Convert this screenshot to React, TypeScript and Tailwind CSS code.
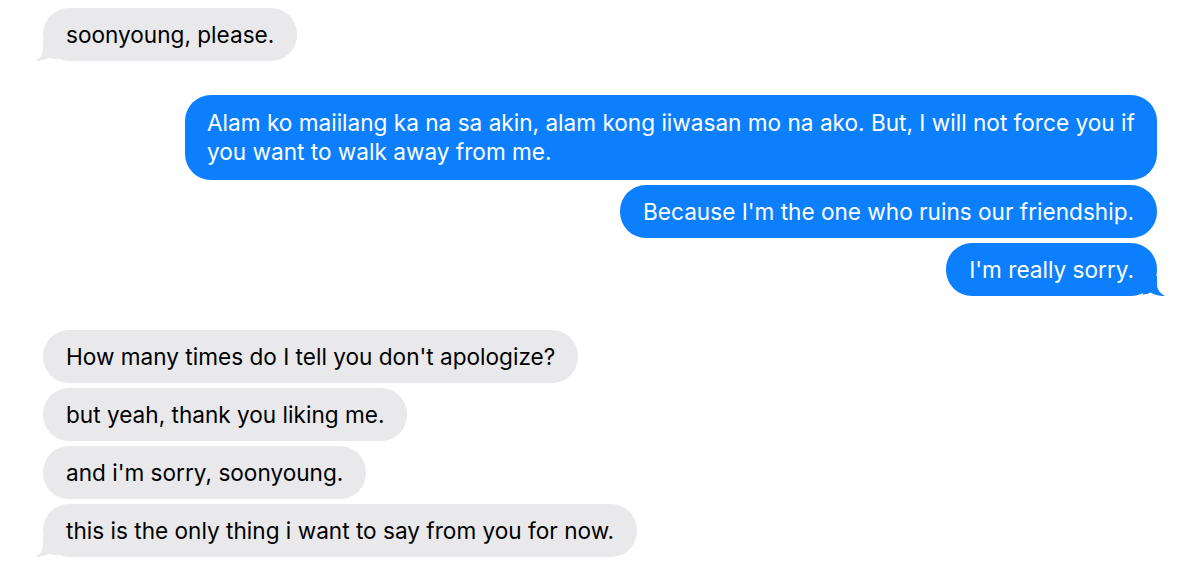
import React from 'react';

type Msg = { text: string; tail?: boolean };

const Tail = ({ side }: { side: 'left' | 'right' }) => (
  <svg
    width="22"
    height="20"
    viewBox="0 0 22 20"
    className={`absolute bottom-0 ${side === 'left' ? '-left-[8px] text-[#e9e9eb]' : '-right-[8px] -scale-x-100 text-[#0b7ffe]'}`}
  >
    <path
      d="M8 0 L8 8 C8 13 5.5 17 0 20 C6 20.3 11 18.8 14.5 16.5 C16.5 17.6 19 18.4 22 18.6 L22 0 Z"
      fill="currentColor"
    />
  </svg>
);

const Bubble = ({ msg, mine, wide }: { msg: Msg; mine?: boolean; wide?: boolean }) => (
  <div
    className={`relative rounded-[26px] py-[12px] text-[22.6px] leading-[29px] ${
      mine ? 'self-end bg-[#0b7ffe] text-white' : 'self-start bg-[#e9e9eb] text-black'
    } ${wide ? 'max-w-[972px] px-[22px] pt-[13px] pb-[14px] rounded-[24px]' : 'px-[23px]'}`}
  >
    {msg.tail && <Tail side={mine ? 'right' : 'left'} />}
    <span className="relative">{msg.text}</span>
  </div>
);

const App: React.FC = () => {
  return (
    <div
      className="w-[1200px] h-[570px] bg-white px-[43px] pt-[8px] flex flex-col overflow-hidden"
      style={{ fontFamily: 'Inter, "Noto Sans", sans-serif' }}
    >
      {/* first incoming */}
      <div className="flex flex-col gap-[5px]">
        <Bubble msg={{ text: 'soonyoung, please.', tail: true }} />
      </div>

      {/* outgoing group */}
      <div className="flex flex-col gap-[5px] mt-[34px]">
        <Bubble
          mine
          wide
          msg={{
            text: 'Alam ko maiilang ka na sa akin, alam kong iiwasan mo na ako. But, I will not force you if you want to walk away from me.',
          }}
        />
        <Bubble mine msg={{ text: "Because I'm the one who ruins our friendship." }} />
        <Bubble mine msg={{ text: "I'm really sorry.", tail: true }} />
      </div>

      {/* incoming group */}
      <div className="flex flex-col gap-[5px] mt-[34px]">
        <Bubble msg={{ text: "How many times do I tell you don't apologize?" }} />
        <Bubble msg={{ text: 'but yeah, thank you liking me.' }} />
        <Bubble msg={{ text: "and i'm sorry, soonyoung." }} />
        <Bubble msg={{ text: 'this is the only thing i want to say from you for now.', tail: true }} />
      </div>
    </div>
  );
};

export default App;
